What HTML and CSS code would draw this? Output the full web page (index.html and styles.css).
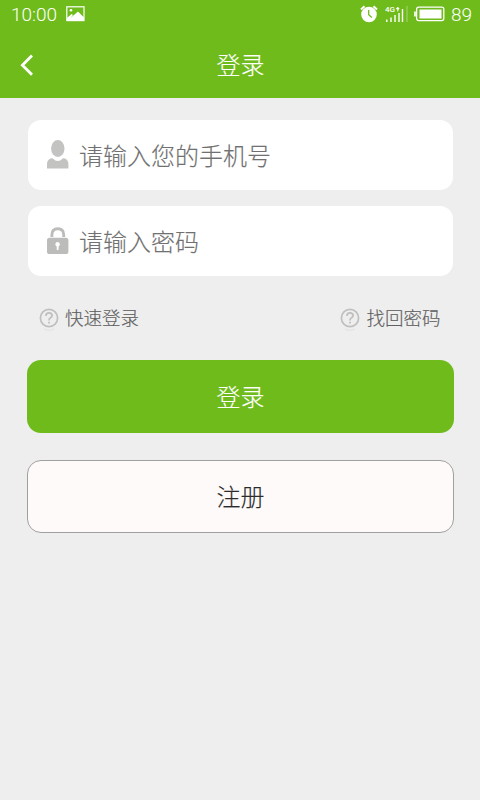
FILE: index.html
```html
<!DOCTYPE html>
<html lang="zh-CN">
<head>
<meta charset="utf-8">
<title>登录</title>
<link rel="stylesheet" href="styles.css">
</head>
<body>
<header class="top">
  <div class="status">
    <span class="time">10:00</span>
    <svg class="photo" width="19" height="16" viewBox="0 0 19 16"><rect x=".8" y=".8" width="17.2" height="13.8" fill="none" stroke="#fff" stroke-width="1.2"/><circle cx="5" cy="4.3" r="1.3" fill="#fff"/><path d="M1 14V12L5.5 8L7 9L4.5 12L12 5.5L18 11.5V14Z" fill="#fff"/></svg>
    <span class="spacer"></span>
    <svg class="alarm" width="18" height="18" viewBox="0 0 18 18"><circle cx="9" cy="9.5" r="7.8" fill="#fff"/><path d="M1 4.5L4.5 1.2M17 4.5L13.5 1.2" stroke="#fff" stroke-width="2"/><path d="M8.7 5V9.8L11.8 12.6" fill="none" stroke="#6fbb1c" stroke-width="1.3"/></svg>
    <svg class="signal" width="24" height="18" viewBox="0 0 24 18"><text x="0" y="7" class="net">4G</text><path d="M1.8 14.5V17M6 12.5V17M10 10V17M14 8V17M17.5 4V17" stroke="#fff" stroke-width="1.4"/><path d="M12.8 6.5V3M11.5 4L12.8 2.2L14.1 4Z" fill="#fff" stroke="#fff" stroke-width="1"/><path d="M22 1V17" stroke="#fff" stroke-opacity=".4" stroke-width="1"/></svg>
    <svg class="battery" width="31" height="16" viewBox="0 0 31 16"><rect x="2.6" y="1.2" width="27.2" height="13.4" rx="2" fill="none" stroke="#fff" stroke-width="1.3"/><rect x="5.5" y="3.5" width="22" height="9" fill="#fff"/><path d="M1 5.5V10.5" stroke="#fff" stroke-width="1.7"/></svg>
    <span class="level">89</span>
  </div>
  <nav class="nav">
    <svg class="back" width="14" height="24" viewBox="0 0 14 24"><path d="M12 2.5L2.4 12.2L12 21.8" fill="none" stroke="#fff" stroke-width="2.8"/></svg>
    <h1 class="title">登录</h1>
  </nav>
</header>
<main class="form">
  <div class="field">
    <svg class="ficon" width="22" height="30" viewBox="0 0 22 30"><ellipse cx="10.8" cy="8.6" rx="6.7" ry="8.5" fill="#c3c3c2"/><path d="M0 28.4V24Q0 20.4 3.4 18.6Q5.6 17.6 6.5 19Q8 21 10.8 21Q13.6 21 15.1 19Q16 17.6 18 18.6Q21.4 20.4 21.4 24V28.4Z" fill="#c3c3c2"/></svg>
    <span class="hint">请输入您的手机号</span>
  </div>
  <div class="field">
    <svg class="ficon" width="22" height="30" viewBox="0 0 22 30"><path d="M4.9 11V8.8Q4.9 2.7 10.8 2.7T16.7 8.8V11" fill="none" stroke="#bcbcba" stroke-width="2.9"/><rect x="0" y="11.7" width="21.4" height="16.4" rx="2.6" fill="#bcbcba"/><circle cx="10.6" cy="18.3" r="2.2" fill="#fff"/><path d="M9.6 18H11.7L11.5 24H9.8Z" fill="#fff"/></svg>
    <span class="hint">请输入密码</span>
  </div>
  <div class="links">
    <span class="link"><svg class="q" width="20" height="24" viewBox="0 0 20 24"><circle cx="10" cy="10" r="8.6" fill="none" stroke="#bfbfbd" stroke-width="1.7"/><path d="M6.9 7.9Q7 4.9 10 4.9T13.1 7.6Q13.1 9 11.5 9.8Q10 10.6 10 12.4M10 13.7V15.6" fill="none" stroke="#bfbfbd" stroke-width="1.8"/><path d="M5 21Q10 23.5 15 21" fill="none" stroke="#e2e2e2" stroke-width="1.2"/></svg><span class="label">快速登录</span></span>
    <span class="link"><svg class="q" width="20" height="24" viewBox="0 0 20 24"><circle cx="10" cy="10" r="8.6" fill="none" stroke="#bfbfbd" stroke-width="1.7"/><path d="M6.9 7.9Q7 4.9 10 4.9T13.1 7.6Q13.1 9 11.5 9.8Q10 10.6 10 12.4M10 13.7V15.6" fill="none" stroke="#bfbfbd" stroke-width="1.8"/><path d="M5 21Q10 23.5 15 21" fill="none" stroke="#e2e2e2" stroke-width="1.2"/></svg><span class="label">找回密码</span></span>
  </div>
  <button class="btn primary">登录</button>
  <button class="btn secondary">注册</button>
</main>
</body>
</html>
```
FILE: styles.css
```css
* { box-sizing: border-box; }
body {
  margin: 0;
  min-height: 800px;
  background: #eee;
  font-family: Roboto, "Noto Sans CJK SC", sans-serif;
  font-weight: 300;
}
svg { display: block; flex: none; }
.top { height: 98px; background: #6fbb1c; color: #fff; }
.status { height: 28px; display: flex; align-items: center; padding: 0 8px 0 11px; font-size: 19px; line-height: 28px; }
.time, .level { padding-top: 1px; }
.time { width: 55px; }
.spacer { flex: 1; }
.alarm { margin-right: 7px; }
.signal { margin-right: 5px; }
.net { font-size: 8px; font-weight: 500; fill: #fff; }
.battery { margin-right: 6px; }
.nav { height: 70px; display: grid; grid-template-columns: 60px 1fr 60px; align-items: center; padding-top: 3px; }
.back { margin-left: 20px; }
.title { margin: 0; padding: 3px 0 0 1px; text-align: center; font-size: 24px; line-height: 36px; font-weight: 300; }
.title, .hint, .label, .btn { -webkit-text-stroke: 0.15px currentColor; }
.form { padding: 21.5px 26.5px 0; }
.field { height: 70px; margin: 0 1px 16.5px; padding-left: 19px; display: flex; align-items: center; background: #fff; border-radius: 13px; }
.ficon { margin-right: 10.5px; }
.hint { padding-top: 4px; color: #707070; font-size: 24px; line-height: 36px; }
.links { height: 40px; margin: 23px 13px 0 12.5px; display: flex; justify-content: space-between; align-items: center; }
.link { display: flex; align-items: center; color: #606060; font-size: 18.5px; line-height: 28px; }
.q { margin: 2px 6px 0 0; }
.btn { display: block; width: 100%; height: 73px; padding: 4px 0 0 1px; border: 0; border-radius: 14px; font: inherit; font-size: 24px; line-height: 36px; }
.primary { margin-top: 20.5px; background: #6fbb1c; color: #fff; }
.secondary { margin-top: 27px; background: #fefaf9; border: 1.5px solid #a0a0a0; color: #2b2b2b; }
```
